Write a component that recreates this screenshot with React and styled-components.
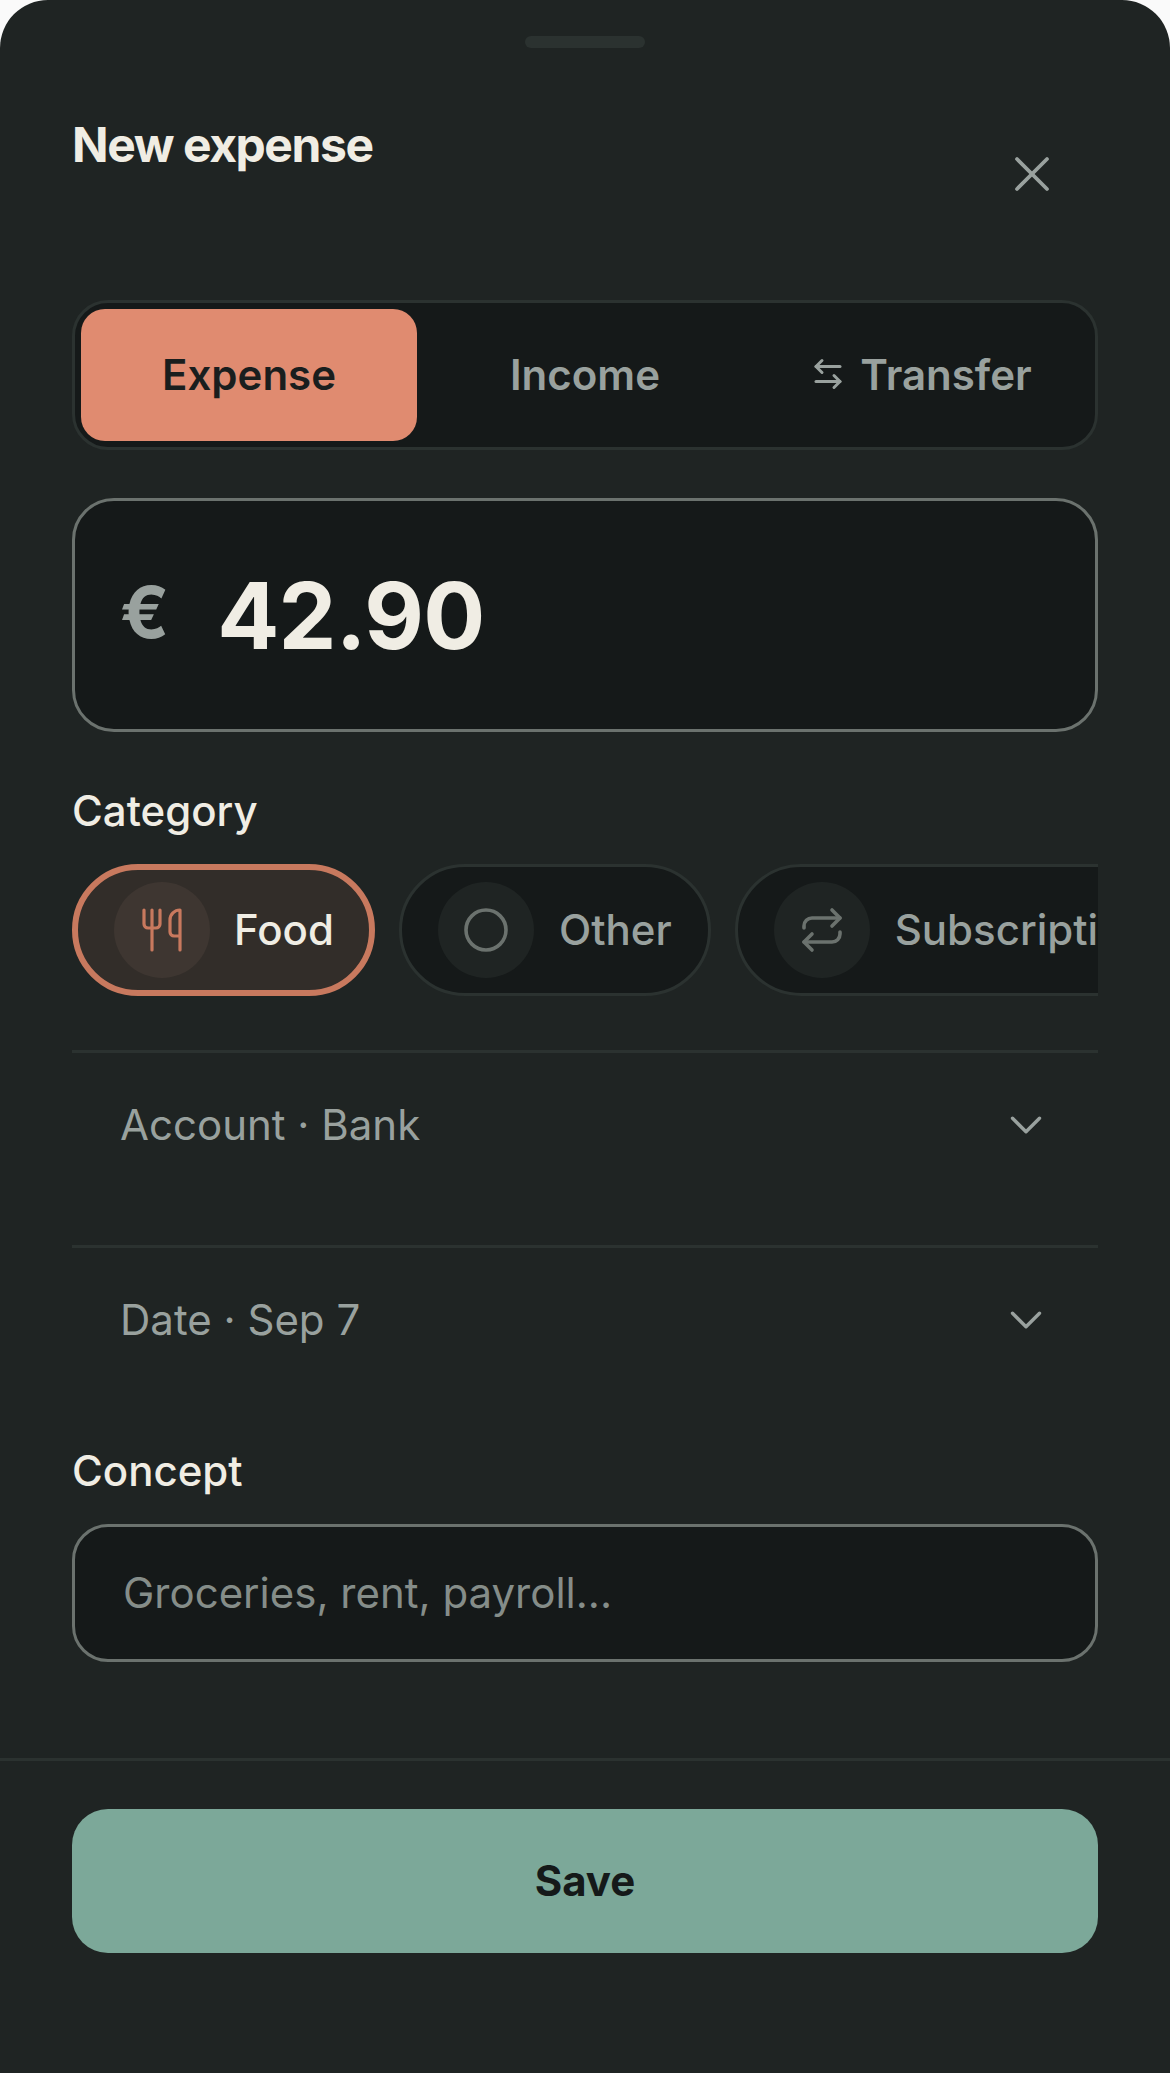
import React from "react"
import styled, { createGlobalStyle } from "styled-components"
import { ArrowLeftRight, ChevronDown, Circle, Repeat, Utensils, X } from "lucide-react"

const GlobalStyle = createGlobalStyle`
  html, body {
    margin: 0;
    padding: 0;
    background: #fafafa;
  }
  * {
    box-sizing: border-box;
  }
`

const Sheet = styled.div`
  width: 1170px;
  height: 2073px;
  background: #1f2423;
  border-radius: 48px 48px 0 0;
  font-family: Inter, "Noto Sans", sans-serif;
  color: #f0ede4;
  display: flex;
  flex-direction: column;
  overflow: hidden;
`

const Handle = styled.div`
  flex: none;
  width: 120px;
  height: 12px;
  margin: 36px auto 0;
  border-radius: 6px;
  background: #2b3230;
`

const Body = styled.div`
  padding: 0 72px;
  display: flex;
  flex-direction: column;
  height: 1710px;
`

const Header = styled.div`
  display: flex;
  justify-content: space-between;
  align-items: flex-start;
  margin-top: 60px;
  height: 132px;
`

const Title = styled.h1`
  margin: 0;
  font-size: 48px;
  line-height: 74px;
  font-weight: 650;
  letter-spacing: -1.44px;
`

const CloseButton = styled.button`
  width: 132px;
  height: 132px;
  background: none;
  border: none;
  padding: 0;
  color: #99a19e;
  display: flex;
  align-items: center;
  justify-content: center;
`

const Segmented = styled.div`
  display: flex;
  height: 150px;
  margin-top: 60px;
  padding: 6px;
  background: #151919;
  border: 3px solid #2b3230;
  border-radius: 36px;
`

const Segment = styled.div`
  flex: 1;
  display: flex;
  align-items: center;
  justify-content: center;
  gap: 14px;
  padding-bottom: 2px;
  border-radius: 24px;
  font-size: 42px;
  font-weight: 600;
  color: ${(p) => (p.$active ? "#1a1e1e" : "#99a19e")};
  background: ${(p) => (p.$active ? "#e08b70" : "transparent")};
`

const AmountBox = styled.div`
  display: flex;
  align-items: center;
  gap: 48px;
  height: 234px;
  margin-top: 48px;
  padding: 0 45px;
  background: #151919;
  border: 3px solid #6b726e;
  border-radius: 42px;
`

const Currency = styled.span`
  font-size: 72px;
  font-weight: 700;
  color: #99a19e;
  line-height: 1;
  position: relative;
  top: -3px;
`

const Amount = styled.span`
  font-size: 92px;
  font-weight: 700;
  line-height: 1;
  letter-spacing: -0.9px;
  padding-top: 2px;
`

const FieldLabel = styled.div`
  font-size: 42px;
  line-height: 61px;
  font-weight: 500;
  margin-top: ${(p) => p.$top}px;
  margin-bottom: 23px;
`

const ChipRow = styled.div`
  display: flex;
  gap: 24px;
  overflow: hidden;
`

const Chip = styled.div`
  flex: none;
  display: flex;
  align-items: center;
  gap: ${(p) => (p.$active ? 24 : 25)}px;
  height: 132px;
  padding: ${(p) => (p.$active ? "0 35px 0 36px" : "0 36px")};
  border-radius: 66px;
  border: ${(p) => (p.$active ? "6px solid #c8795e" : "3px solid #2b3230")};
  background: ${(p) => (p.$active ? "#322d29" : "#151919")};
  color: ${(p) => (p.$active ? "#f0ede4" : "#99a19e")};
  font-size: 42px;
  font-weight: 500;
`

const ChipLabel = styled.span`
  padding-bottom: 2px;
`

const ChipIcon = styled.span`
  flex: none;
  width: 96px;
  height: 96px;
  border-radius: 50%;
  display: flex;
  align-items: center;
  justify-content: center;
  background: ${(p) => (p.$active ? "#3e3631" : "#1f2423")};
  color: ${(p) => (p.$active ? "#c8795e" : "#6b726e")};
`

const SelectRow = styled.div`
  display: flex;
  align-items: center;
  justify-content: space-between;
  height: 195px;
  margin-top: ${(p) => p.$top || 0}px;
  padding: 0 45px 49px 48px;
  border-top: 3px solid #2b3230;
  font-size: 42px;
  color: #99a19e;
`

const ChevronWrap = styled.span`
  display: flex;
  color: #99a19e;
`

const ConceptInput = styled.input`
  display: block;
  width: 100%;
  height: 138px;
  padding: 0 48px 1px;
  background: #151919;
  border: 3px solid #6b726e;
  border-radius: 36px;
  outline: none;
  font-family: inherit;
  font-size: 42px;
  color: #f0ede4;

  &::placeholder {
    color: #858d89;
    opacity: 1;
  }
`

const Footer = styled.div`
  border-top: 3px solid #2b3230;
  padding: 48px 72px 0;
`

const SaveButton = styled.button`
  display: block;
  width: 100%;
  height: 144px;
  border: none;
  border-radius: 36px;
  padding: 0 0 2px;
  background: #7ca899;
  color: #151919;
  font-family: inherit;
  font-size: 42px;
  font-weight: 700;
`

export default function App() {
  return (
    <>
      <GlobalStyle />
      <Sheet>
        <Handle />
        <Body>
          <Header>
            <Title>New expense</Title>
            <CloseButton>
              <X size={60} strokeWidth={1.5} />
            </CloseButton>
          </Header>
          <Segmented>
            <Segment $active>Expense</Segment>
            <Segment>Income</Segment>
            <Segment>
              <ArrowLeftRight size={36} strokeWidth={2} />
              Transfer
            </Segment>
          </Segmented>
          <AmountBox>
            <Currency>€</Currency>
            <Amount>42.90</Amount>
          </AmountBox>
          <FieldLabel $top={48}>Category</FieldLabel>
          <ChipRow>
            <Chip $active>
              <ChipIcon $active>
                <Utensils size={48} strokeWidth={1.6} />
              </ChipIcon>
              <ChipLabel>Food</ChipLabel>
            </Chip>
            <Chip>
              <ChipIcon>
                <Circle size={48} strokeWidth={1.8} />
              </ChipIcon>
              <ChipLabel>Other</ChipLabel>
            </Chip>
            <Chip>
              <ChipIcon>
                <Repeat size={48} strokeWidth={1.8} />
              </ChipIcon>
              <ChipLabel>Subscriptions</ChipLabel>
            </Chip>
          </ChipRow>
          <SelectRow $top={54}>
            Account · Bank
            <ChevronWrap>
              <ChevronDown size={54} strokeWidth={1.5} />
            </ChevronWrap>
          </SelectRow>
          <SelectRow>
            Date · Sep 7
            <ChevronWrap>
              <ChevronDown size={54} strokeWidth={1.5} />
            </ChevronWrap>
          </SelectRow>
          <FieldLabel $top={0}>Concept</FieldLabel>
          <ConceptInput placeholder="Groceries, rent, payroll..." readOnly />
        </Body>
        <Footer>
          <SaveButton>Save</SaveButton>
        </Footer>
      </Sheet>
    </>
  )
}
